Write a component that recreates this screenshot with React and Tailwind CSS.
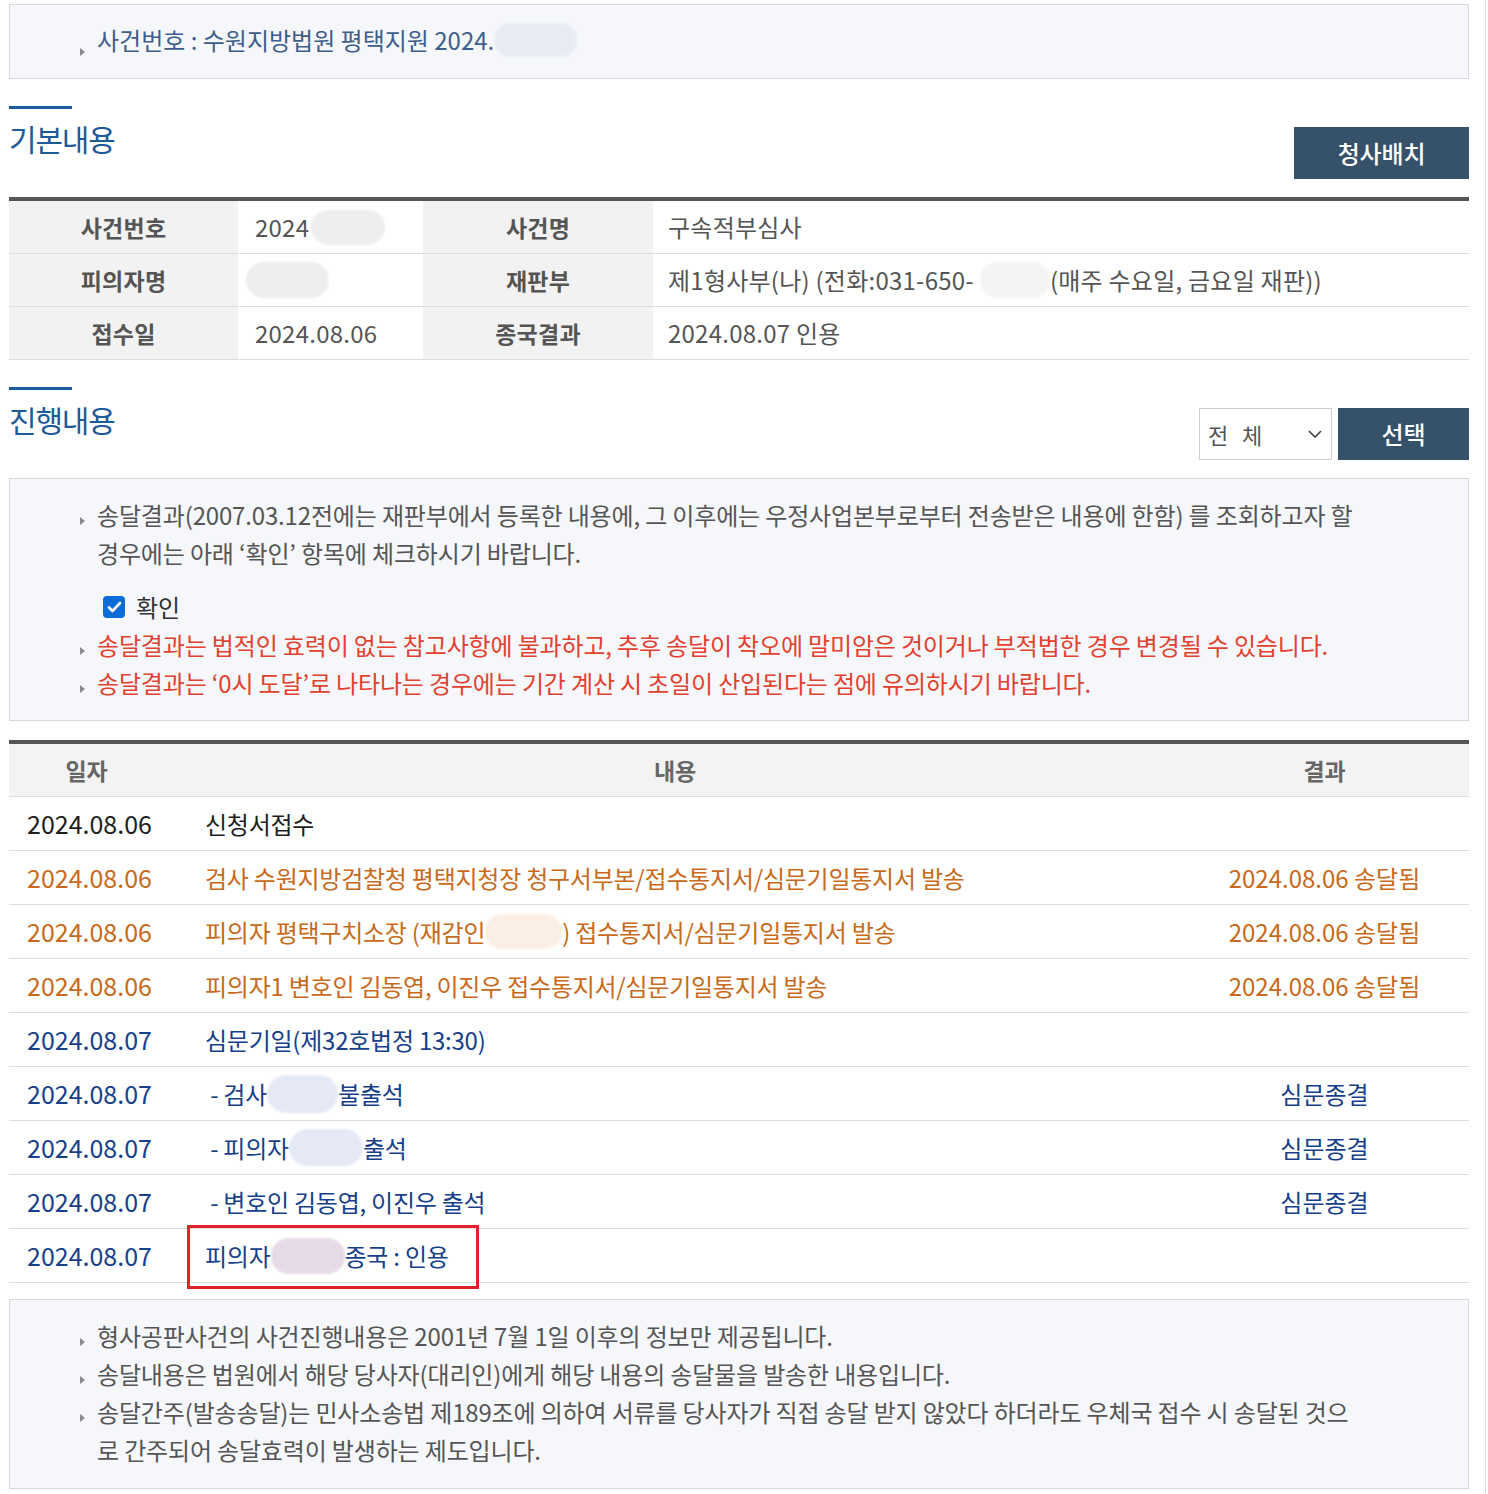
import React from 'react';

// Small gray arrow used in front of each note line
function Bullet() {
  return (
    <span className="w-[17px] shrink-0 pt-[21px]">
      <span className="block h-0 w-0 border-y-[4px] border-l-[5px] border-y-transparent border-l-[#8a8a8a]" />
    </span>
  );
}

// Masked personal info (soft pill)
function Mask({ w, h = 36, tone = 'bg-[#ebeef5]', className = '' }) {
  return (
    <span
      className={`inline-block rounded-full align-middle blur-[1px] ${tone} ${className}`}
      style={{ width: w, height: h }}
    />
  );
}

function Note({ children, className = '' }) {
  return (
    <div className={`flex ${className}`}>
      <Bullet />
      <div>{children}</div>
    </div>
  );
}

function SectionTitle({ children }) {
  return (
    <div>
      <div className="h-[3px] w-[63px] bg-[#1c5b9c]" />
      <h2 className="mt-[9px] text-[30px] leading-[40px] tracking-[-0.04em] text-[#1d5a98]">{children}</h2>
    </div>
  );
}

const basicRows = [
  ['사건번호', <span className="flex items-center">2024<Mask w={74} h={35} tone="bg-[#eeeeee]" className="ml-[2px]" /></span>, '사건명', '구속적부심사'],
  ['피의자명', <span className="flex items-center"><Mask w={83} h={36} tone="bg-[#eeeeee]" className="-ml-[9px]" /></span>, '재판부',
    <span className="flex items-center">제1형사부(나) (전화:031-650-<Mask w={70} h={36} tone="bg-[#f4f4f4]" className="ml-[6px]" />(매주 수요일, 금요일 재판))</span>],
  ['접수일', '2024.08.06', '종국결과', '2024.08.07 인용'],
];

const BLACK = 'text-[#1e1e1e]';
const ORANGE = 'text-[#c86a1c]';
const NAVY = 'text-[#173f8a]';

const progress = [
  { date: '2024.08.06', body: '신청서접수', result: '', color: BLACK },
  { date: '2024.08.06', body: '검사 수원지방검찰청 평택지청장 청구서부본/접수통지서/심문기일통지서 발송', result: '2024.08.06 송달됨', color: ORANGE },
  {
    date: '2024.08.06',
    body: <>피의자 평택구치소장 (재감인<Mask w={77} h={35} tone="bg-[#fbeee4]" />) 접수통지서/심문기일통지서 발송</>,
    result: '2024.08.06 송달됨',
    color: ORANGE,
  },
  { date: '2024.08.06', body: '피의자1 변호인 김동엽, 이진우 접수통지서/심문기일통지서 발송', result: '2024.08.06 송달됨', color: ORANGE },
  { date: '2024.08.07', body: '심문기일(제32호법정 13:30)', result: '', color: NAVY },
  { date: '2024.08.07', body: <>&nbsp;- 검사 <Mask w={71} h={38} tone="bg-[#e4e9f5]" />불출석</>, result: '심문종결', color: NAVY },
  { date: '2024.08.07', body: <>&nbsp;- 피의자<Mask w={74} h={37} tone="bg-[#e4e9f5]" />출석</>, result: '심문종결', color: NAVY },
  { date: '2024.08.07', body: '\u00a0- 변호인 김동엽, 이진우 출석', result: '심문종결', color: NAVY },
  {
    date: '2024.08.07',
    body: <>피의자<Mask w={74} h={36} tone="bg-[#e6dae6]" />종국 : 인용</>,
    result: '',
    color: NAVY,
    marked: true,
  },
];

export default function App() {
  return (
    <div className="flex min-h-[1494px] w-[1488px] bg-white font-['Noto_Sans_CJK_KR','Noto_Sans',sans-serif] tracking-[-0.01em]">
      <div className="w-[1486px] border-r border-[#dcdcdc] pl-[9px] pr-[16px] pt-[4px]">
        {/* case number banner */}
        <div className="flex h-[75px] items-center border border-[#d6d9de] bg-[#f5f7fb] pl-[70px] text-[24px] tracking-normal text-[#3e5e8c]">
          <Bullet />
          <span className="-mt-[3px] flex items-center">사건번호 : 수원지방법원 평택지원 2024.<Mask w={83} h={34} tone="bg-[#e9ecf5]" /></span>
        </div>

        {/* basic info */}
        <div className="mt-[27px] flex items-start justify-between">
          <SectionTitle>기본내용</SectionTitle>
          <button className="mt-[21px] h-[52px] w-[175px] bg-[#36526a] text-[24px] font-medium text-white">청사배치</button>
        </div>

        <div className="mt-[18px] border-t-[4px] border-[#555555] text-[24px] tracking-[0.01em] text-[#555555]">
          {basicRows.map(([l1, v1, l2, v2], i) => (
            <div key={i} className="grid h-[53px] grid-cols-[229px_185px_230px_1fr] border-b border-[#dddddd]">
              <div className="flex items-center justify-center bg-[#f2f2f2] text-[23px] font-bold">{l1}</div>
              <div className="flex items-center pl-[17px]">{v1}</div>
              <div className="flex items-center justify-center bg-[#f2f2f2] text-[23px] font-bold">{l2}</div>
              <div className="flex items-center pl-[15px]">{v2}</div>
            </div>
          ))}
        </div>

        {/* progress */}
        <div className="mt-[27px] flex items-start justify-between">
          <SectionTitle>진행내용</SectionTitle>
          <div className="mt-[21px] flex gap-[6px]">
            <div className="flex h-[52px] w-[133px] items-center justify-between border border-[#cfcfcf] pl-[8px] pr-[8px] text-[22px] text-[#555555]">
              <span className="tracking-[0.2em]">전 체</span>
              <svg width="16" height="10" viewBox="0 0 16 10" fill="none" stroke="#444" strokeWidth="1.6">
                <path d="M2 2l6 6 6-6" />
              </svg>
            </div>
            <button className="h-[52px] w-[131px] bg-[#36526a] text-[24px] font-medium text-white">선택</button>
          </div>
        </div>

        <div className="mt-[18px] border border-[#d6d9de] bg-[#f5f7fb] pb-[18px] pl-[70px] pt-[17px] text-[24px] leading-[38px] text-[#555555]">
          <Note>
            송달결과(2007.03.12전에는 재판부에서 등록한 내용에, 그 이후에는 우정사업본부로부터 전송받은 내용에 한함) 를 조회하고자 할
            <br />
            경우에는 아래 ‘확인’ 항목에 체크하시기 바랍니다.
          </Note>
          <label className="ml-[23px] mt-[16px] flex h-[38px] items-center gap-[11px] text-[#333333]">
            <span className="flex h-[22px] w-[22px] items-center justify-center rounded-[4px] bg-[#0b6cd8]">
              <svg width="15" height="12" viewBox="0 0 15 12" fill="none" stroke="white" strokeWidth="2.6" strokeLinecap="round" strokeLinejoin="round">
                <path d="M2 6.5l3.5 3.5L13 2" />
              </svg>
            </span>
            확인
          </label>
          <Note className="text-[#e2412f]">
            송달결과는 법적인 효력이 없는 참고사항에 불과하고, 추후 송달이 착오에 말미암은 것이거나 부적법한 경우 변경될 수 있습니다.
          </Note>
          <Note className="text-[#e2412f]">
            송달결과는 ‘0시 도달’로 나타나는 경우에는 기간 계산 시 초일이 산입된다는 점에 유의하시기 바랍니다.
          </Note>
        </div>

        <div className="mt-[19px] border-t-[4px] border-[#555555] text-[24px]">
          <div className="grid h-[53px] grid-cols-[161px_1fr_289px] items-center border-b border-[#dddddd] bg-[#f3f3f3] text-[23px] font-bold text-[#666666]">
            <div className="pr-[6px] text-center">일자</div>
            <div className="text-center">내용</div>
            <div className="text-center">결과</div>
          </div>
          {progress.map((r, i) => (
            <div key={i} className={`grid h-[54px] grid-cols-[161px_1fr_289px] items-center border-b border-[#dddddd] ${r.color}`}>
              <div className="text-center text-[25px] tracking-normal">{r.date}</div>
              <div className="relative pl-[35px] tracking-[-0.01em]">
                {r.marked && (
                  <span className="pointer-events-none absolute -top-[13px] left-[17px] h-[64px] w-[292px] border-[3px] border-[#e0232b]" />
                )}
                <span className="flex items-center">{r.body}</span>
              </div>
              <div className="text-center tracking-normal">{r.result}</div>
            </div>
          ))}
        </div>

        <div className="mt-[16px] border border-[#d6d9de] bg-[#f5f7fb] pb-[19px] pl-[70px] pt-[17px] text-[24px] leading-[38px] text-[#555555]">
          <Note>형사공판사건의 사건진행내용은 2001년 7월 1일 이후의 정보만 제공됩니다.</Note>
          <Note>송달내용은 법원에서 해당 당사자(대리인)에게 해당 내용의 송달물을 발송한 내용입니다.</Note>
          <Note>
            송달간주(발송송달)는 민사소송법 제189조에 의하여 서류를 당사자가 직접 송달 받지 않았다 하더라도 우체국 접수 시 송달된 것으
            <br />
            로 간주되어 송달효력이 발생하는 제도입니다.
          </Note>
        </div>
      </div>
    </div>
  );
}
